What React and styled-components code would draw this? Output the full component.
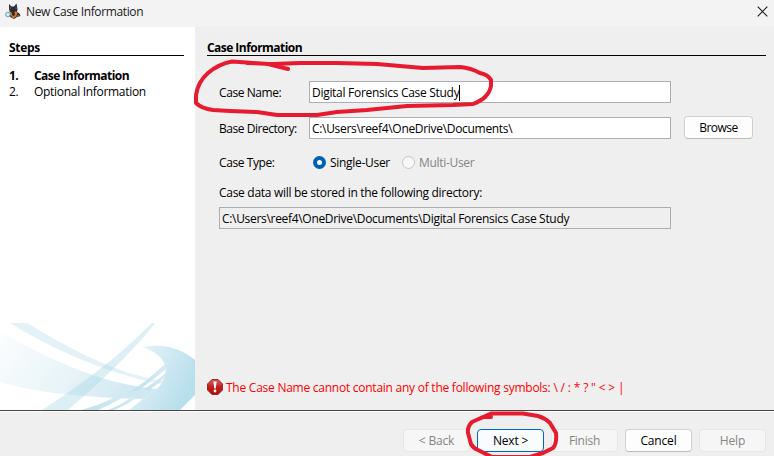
import React from 'react';
import styled, { createGlobalStyle, css } from 'styled-components';

const GlobalStyle = createGlobalStyle`
  * { box-sizing: border-box; }
  html, body { margin: 0; padding: 0; overflow: hidden; }
  body { font-family: "Open Sans", "Noto Sans", sans-serif; font-size: 12px; line-height: 16px; color: #000; }
  button, input { font: inherit; }
`;

const Dialog = styled.div`
  position: relative;
  display: flex;
  flex-direction: column;
  width: 774px;
  height: 456px;
  overflow: hidden;
  background: #efefef;
  white-space: pre;
`;

const TitleBar = styled.header`
  display: flex;
  align-items: flex-start;
  flex: 0 0 27px;
  padding: 3px 6px 0 5px;
  background: #f3f3f3;
`;

const Title = styled.span`
  flex: 1;
  margin: 1px 0 0 5px;
  color: #1a1a1a;
  letter-spacing: -0.37px;
`;

const CloseIcon = styled.svg`
  margin-top: 3px;
`;

const Body = styled.div`
  display: flex;
  flex: 0 0 383px;
`;

const Sidebar = styled.aside`
  display: flex;
  flex-direction: column;
  width: 195px;
  background: #fff;
`;

const Heading = styled.h2`
  height: 17px;
  margin: 12px ${p => p.$right}px 0 ${p => p.$left}px;
  padding-top: 1px;
  border-bottom: 1px solid #000;
  font-size: 12px;
  line-height: 16px;
  font-weight: 700;
  letter-spacing: ${p => p.$spacing}px;
`;

const StepList = styled.ol`
  flex: 1;
  margin: 12px 0 0;
  padding: 0 0 0 9px;
  list-style: none;
`;

const Step = styled.li`
  display: grid;
  grid-template-columns: 25px 1fr;
  letter-spacing: -0.3px;
  ${p => p.$active && css`font-weight: 700; letter-spacing: -0.54px;`}
`;

const Swoosh = styled.svg`
  display: block;
  flex: 0 0 87px;
`;

const Panel = styled.main`
  display: flex;
  flex-direction: column;
  flex: 1;
`;

const Form = styled.div`
  display: flex;
  flex-direction: column;
  padding: 25px 21px 0 24px;
`;

const FormRow = styled.div`
  display: flex;
  align-items: center;
  height: ${p => p.$height}px;
  margin-bottom: ${p => p.$gap}px;
`;

const Label = styled.label`
  width: 90px;
  padding-top: 2px;
  letter-spacing: ${p => p.$spacing}px;
`;

const Field = styled.div`
  display: flex;
  align-items: center;
  width: ${p => (p.$wide ? 452 : 362)}px;
  height: 22px;
  padding: 2px 0 0 2px;
  border: 1px solid #abadb3;
  background: ${p => (p.$wide ? '#efefef' : '#fff')};
  letter-spacing: ${p => p.$spacing}px;
`;

const Caret = styled.span`
  width: 1px;
  height: 16px;
  background: #000;
`;

const Note = styled.p`
  margin: 0 0 6px;
  letter-spacing: -0.29px;
`;

const RadioOption = styled.span`
  display: flex;
  align-items: center;
  gap: 4px;
  margin-left: ${p => p.$indent}px;
  color: ${p => (p.$disabled ? '#858585' : '#000')};
  letter-spacing: -0.3px;
`;

const RadioText = styled.span`
  padding-top: 2px;
`;

const RadioMark = styled.span`
  width: 13px;
  height: 13px;
  border-radius: 50%;
  border: ${p => (p.$checked ? '4px solid #005fb8' : '1px solid #c5c5c5')};
  background: ${p => (p.$checked ? '#fff' : '#f7f7f7')};
`;

const Button = styled.button`
  width: ${p => p.$width || 67}px;
  height: 23px;
  margin: 0;
  padding: 1px 0 0;
  border: 1px solid #d0d0d0;
  border-bottom-color: #bcbcbc;
  border-radius: 4px;
  background: #fdfdfd;
  color: #000;
  line-height: 20px;
  letter-spacing: ${p => p.$spacing || -0.15}px;
  ${p => p.$primary && css`border-color: #0067c0; background: #f9fcff;`}
  ${p => p.disabled && css`border-color: #e6e6e6; background: #f6f6f6; color: #858585;`}
`;

const BrowseButton = styled(Button)`
  margin-left: 13px;
`;

const ErrorLine = styled.div`
  display: flex;
  align-items: center;
  gap: 3px;
  height: 18px;
  margin: auto 0 14px 12px;
  color: #f00;
  letter-spacing: -0.25px;
`;

const ErrorText = styled.span`
  padding-top: 2px;
`;

const Symbols = styled.span`
  letter-spacing: -0.16px;
`;

const Footer = styled.footer`
  display: flex;
  justify-content: flex-end;
  align-items: flex-start;
  gap: 7px;
  flex: 1;
  padding: 18px 8px 0 0;
  border-top: 1px solid #444;
  box-shadow: inset 0 1px #fff;
`;

const InkLayer = styled.svg`
  position: absolute;
  inset: 0;
  pointer-events: none;
`;

function DogIcon() {
  return (
    <svg width="16" height="17" viewBox="0 0 16 17">
      <path d="M4 1 6.5 3.5 9 3.5 11.5.5 12.5 6 12 9 14.5 10.5 15.5 13 12 14 9 16 5 14 5 10 4 6Z" fill="#292c34" />
      <path d="M5 3 6.2 5.8 4.8 6Z M11 3 11.8 6 10.2 5.8Z" fill="#77635c" />
      <path d="M5 8.500 8 10.500 11 8 12.500 10 11 13.500 8.500 15.500 6 13.500 4.500 11Z" fill="#d27a27" />
      <path d="M7 9.5 9.5 9.5 10 12 8.5 13 7 12Z" fill="#28262a" />
      <path d="M11 13 14 11.5 14.5 13 12 14Z" fill="#9b5423" />
      <circle cx="2.9" cy="11.5" r="2.3" fill="#c9f0f7" stroke="#6a9cac" strokeWidth="1" />
      <path d="M4.8 12.5 7 14" stroke="#4d5260" strokeWidth="1.2" />
    </svg>
  );
}

function ErrorIcon() {
  return (
    <svg width="16" height="16" viewBox="0 0 16 16">
      <defs>
        <linearGradient id="stop" x1="0" y1="0" x2="0" y2="1">
          <stop offset="0" stopColor="#d96060" />
          <stop offset="0.5" stopColor="#c81e1e" />
          <stop offset="1" stopColor="#b00b0b" />
        </linearGradient>
      </defs>
      <path d="M4.9.6h6.2l4.3 4.3v6.2l-4.3 4.3H4.9L.6 11.1V4.9Z" fill="url(#stop)" stroke="#942020" strokeWidth="1" />
      <path d="M6.4 2.4h3.2L8.8 9.6H7.2Z" fill="#fff" />
      <circle cx="8" cy="12" r="1.4" fill="#fff" />
    </svg>
  );
}

function SidebarArt() {
  return (
    <Swoosh width="195" height="87" viewBox="0 0 195 87">
      <defs>
        <linearGradient id="sweep" x1="0" y1="0.1" x2="1" y2="0.4">
          <stop offset="0" stopColor="#fbfdfe" />
          <stop offset="0.55" stopColor="#e8f4f8" />
          <stop offset="1" stopColor="#cfe8f1" />
        </linearGradient>
        <linearGradient id="crescent" x1="0" y1="0" x2="1" y2="0.5">
          <stop offset="0" stopColor="#eef7fa" />
          <stop offset="0.5" stopColor="#d3eaf3" />
          <stop offset="1" stopColor="#b7dfec" />
        </linearGradient>
        <linearGradient id="tail" x1="0" y1="1" x2="1" y2="0">
          <stop offset="0" stopColor="#c0e2ee" />
          <stop offset="1" stopColor="#d5ebf3" />
        </linearGradient>
      </defs>
      <path d="M0 9C43 32 97 61 157 66L143 76C94 75 35 70 0 59Z" fill="url(#sweep)" />
      <path d="M10 0H27C61 20 110 50 164 58L160 61C105 50 48 24 10 0Z" fill="#b9dfeb" fillOpacity="0.42" />
      <path d="M152 0H155C137 24 100 60 68 87H42C76 65 119 34 152 0Z" fill="#a8d6e6" fillOpacity="0.4" />
      <path d="M143 24C163 20 181 25 195 37V72L180 87H129L143 76L157 66C164 59 167 50 165 42C162 34 154 28 143 24Z" fill="url(#crescent)" />
      <path d="M165 41C152 53 141 62 130 69L139 67C153 57 161 50 166 46Z" fill="url(#tail)" />
      <path d="M166 49C159 57 152 61 144 66L149 67C156 62 163 57 165 53Z" fill="url(#tail)" />
      <path d="M113 75H122C113 80 105 84 98 87H81C93 84 103 80 113 75Z" fill="url(#tail)" />
      <path d="M129 76H135C127 81 121 84 114 87H108C116 84 123 80 129 76Z" fill="url(#tail)" />
    </Swoosh>
  );
}

export default function App() {
  return (
    <Dialog>
      <GlobalStyle />
      <TitleBar>
        <DogIcon />
        <Title>New Case Information</Title>
        <CloseIcon width="11" height="11" viewBox="0 0 11 11">
          <path d="M.7.7 10.3 10.3M10.3.7.7 10.3" stroke="#1a1a1a" strokeWidth="1.1" />
        </CloseIcon>
      </TitleBar>
      <Body>
        <Sidebar>
          <Heading $left={9} $right={11} $spacing={-0.3}>Steps</Heading>
          <StepList>
            <Step $active><span>1.</span><span>Case Information</span></Step>
            <Step><span>2.</span><span>Optional Information</span></Step>
          </StepList>
          <SidebarArt />
        </Sidebar>
        <Panel>
          <Heading $left={12} $right={8} $spacing={-0.54}>Case Information</Heading>
          <Form>
            <FormRow $height={22} $gap={13}>
              <Label $spacing={-0.42}>Case Name:</Label>
              <Field $spacing={-0.29}>Digital Forensics Case Study<Caret /></Field>
            </FormRow>
            <FormRow $height={23} $gap={14}>
              <Label $spacing={-0.46}>Base Directory:</Label>
              <Field $spacing={-0.31}>{'C:\\Users\\reef4\\OneDrive\\Documents\\'}</Field>
              <BrowseButton $width={69} $spacing={-0.5}>Browse</BrowseButton>
            </FormRow>
            <FormRow $height={18} $gap={14}>
              <Label $spacing={-0.42}>Case Type:</Label>
              <RadioOption $indent={4}><RadioMark $checked /><RadioText>Single-User</RadioText></RadioOption>
              <RadioOption $indent={12} $disabled><RadioMark /><RadioText>Multi-User</RadioText></RadioOption>
            </FormRow>
            <Note>Case data will be stored in the following directory:</Note>
            <Field $wide $spacing={-0.31}>{'C:\\Users\\reef4\\OneDrive\\Documents\\Digital Forensics Case Study'}</Field>
          </Form>
          <ErrorLine>
            <ErrorIcon />
            <ErrorText>
              {'The Case Name cannot contain any of the following symbols: '}
              <Symbols>{'\\ / : * ? " < > |'}</Symbols>
            </ErrorText>
          </ErrorLine>
        </Panel>
      </Body>
      <Footer>
        <Button disabled>&lt; Back</Button>
        <Button $primary $spacing={-0.2}>Next &gt;</Button>
        <Button disabled $spacing={-0.25}>Finish</Button>
        <Button>Cancel</Button>
        <Button disabled>Help</Button>
      </Footer>
      <InkLayer width="774" height="456" viewBox="0 0 774 456" fill="none" stroke="#e61b30" strokeWidth="4" strokeLinecap="round" strokeLinejoin="round">
        <path d="M288 69 268 64 247 62.500 232 61.500C224 63 215 67 208 73C200 80 197 88 196 95V103C200 107 205 109 213 110L230 111 257 112 277 115H317L337 112 367 110 387 108 407 106 453 105 473 104C478 102 482 100 485 97Q490 92 491 86V80C489 76 485 74 480 73Q471 68 460 67L423 68 377 64 337 63H300L273 64 247 63" />
        <path d="M491 417 483 417 472 422Q467 427 468 433L471 444Q473 448 478 450L492 457H530L543 453 553 448Q557 444 556 433L550 423Q545 418 538 416L523 413.500H491L479 419" />
      </InkLayer>
    </Dialog>
  );
}
